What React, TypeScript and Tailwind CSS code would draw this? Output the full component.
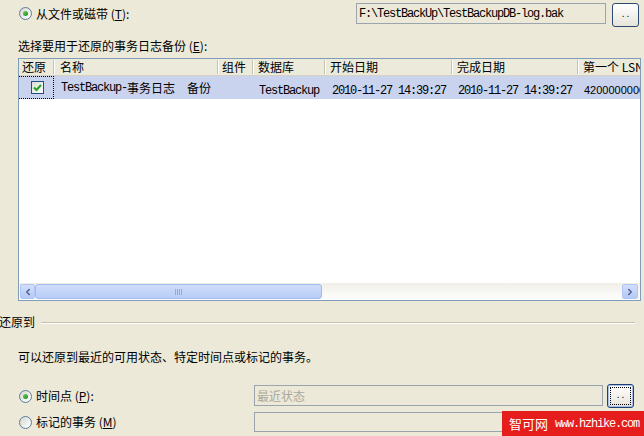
import { ChevronLeft, ChevronRight } from "lucide-react";

const cjk = "font-['Noto_Sans_CJK_SC',sans-serif] text-[12px]";
const mono = "font-['Liberation_Mono','Noto_Sans_CJK_SC',monospace] text-[12px] tracking-[-1.2px]";

function Radio({ checked }: { checked?: boolean }) {
  return (
    <span className="relative inline-block w-[13px] h-[13px] shrink-0 rounded-full border border-[#5d7c9c] bg-gradient-to-br from-[#d8d8cf] to-white">
      {checked && (
        <span className="absolute left-[3px] top-[3px] w-[5px] h-[5px] rounded-full bg-gradient-to-br from-[#5fd35f] to-[#1a8a1a]" />
      )}
    </span>
  );
}

function XpButton({ focused }: { focused?: boolean }) {
  return (
    <div
      className={
        "w-[27px] h-[24px] shrink-0 rounded-[3px] border flex items-center justify-center bg-gradient-to-b from-white to-[#e6e4da] " +
        (focused ? "border-[#1e3f72] shadow-[inset_0_0_0_1px_#a9c0ea]" : "border-[#2c4a73]")
      }
    >
      <div className={"w-[21px] h-[18px] flex items-center justify-center " + (focused ? "border border-dotted border-black" : "")}>
        <span className="font-['Liberation_Sans',sans-serif] text-[10px] leading-none tracking-[2px] text-black -mt-[2px] pl-[2px]">..</span>
      </div>
    </div>
  );
}

function HeaderCell({ w, label, pl = 5 }: { w: number; label: string; pl?: number }) {
  return (
    <div className="flex items-center h-full shrink-0" style={{ width: w }}>
      <span className={cjk + " flex-1 whitespace-nowrap overflow-hidden text-black"} style={{ paddingLeft: pl }}>
        {label}
      </span>
      <span className="w-px h-[14px] bg-[#c5c2b2] shadow-[1px_0_0_#ffffff]" />
    </div>
  );
}

export default function App() {
  return (
    <div className="relative w-[644px] h-[436px] overflow-hidden bg-[#ece9d8] text-black flex flex-col">
      {/* source row */}
      <div className="flex mt-[3px] h-[24px]">
        <div className="w-[356px] h-[21px] pl-[19px] flex items-center">
          <Radio checked />
          <span className={cjk + " ml-[4px] leading-none"}>
            从文件或磁带 (<u>T</u>):
          </span>
        </div>
        <div className="w-[250px] h-[21px] border border-[#9aa5ae] bg-[#ece9d8] flex items-center pl-[2px]">
          <span className={mono + " whitespace-pre"}>F:\TestBackUp\TestBackupDB-log.bak</span>
        </div>
        <div className="ml-[6px]">
          <XpButton />
        </div>
      </div>

      <div className={cjk + " mt-[12px] h-[14px] leading-[14px] pl-[18px]"}>
        选择要用于还原的事务日志备份 (<u>E</u>):
      </div>

      {/* backup list */}
      <div className="mt-[5px] ml-[18px] w-[623px] h-[243px] border border-[#7f9db9] bg-white flex flex-col overflow-hidden">
        <div className="h-[17px] flex bg-[#ebeadb] border-b border-[#d6d2c2] shrink-0 whitespace-nowrap">
          <HeaderCell w={35} label="还原" pl={3} />
          <HeaderCell w={164} label="名称" pl={6} />
          <HeaderCell w={35} label="组件" pl={4} />
          <HeaderCell w={72} label="数据库" />
          <HeaderCell w={127} label="开始日期" />
          <HeaderCell w={126} label="完成日期" />
          <HeaderCell w={80} label="第一个 LSN" />
        </div>
        <div className="h-[23px] flex bg-[#cad3ee] shrink-0 whitespace-nowrap items-center">
          <div className="w-[36px] shrink-0 h-full -ml-px border border-dotted border-black flex items-center justify-center pl-[2px]">
            <span className="w-[13px] h-[13px] border border-[#1c5180] bg-gradient-to-br from-[#dcdcd6] to-white flex items-center justify-center">
              <svg width="9" height="9" viewBox="0 0 9 9">
                <path d="M1 4.5 L3.5 7 L8 2" stroke="#21a121" strokeWidth="2" fill="none" />
              </svg>
            </span>
          </div>
          <div className="w-[164px] shrink-0 pl-[7px] flex items-center overflow-hidden">
            <span className={mono + " whitespace-pre"}>TestBackup-</span>
            <span className={cjk}>事务日志</span>
            <span className={mono + " whitespace-pre"}>  </span>
            <span className={cjk}>备份</span>
          </div>
          <div className="w-[35px] shrink-0" />
          <div className="w-[72px] shrink-0 pl-[6px] overflow-hidden">
            <span className={mono}>TestBackup</span>
          </div>
          <div className="w-[127px] shrink-0 pl-[7px] overflow-hidden">
            <span className={mono + " whitespace-pre"}>2010-11-27 14:39:27</span>
          </div>
          <div className="w-[126px] shrink-0 pl-[6px] overflow-hidden">
            <span className={mono + " whitespace-pre"}>2010-11-27 14:39:27</span>
          </div>
          <div className="w-[80px] shrink-0 pl-[6px]">
            <span className="font-['Liberation_Sans',sans-serif] text-[11px]">42000000000000</span>
          </div>
        </div>
        <div className="flex-1" />
        {/* horizontal scrollbar */}
        <div className="h-[17px] shrink-0 flex items-stretch px-[1px] py-px bg-gradient-to-b from-[#f0efe8] to-white">
          <div className="w-[15px] rounded-[2px] border border-[#b3c6f3] bg-gradient-to-b from-[#d2defc] to-[#b5c9f6] flex items-center justify-center">
            <ChevronLeft size={10} strokeWidth={3.5} color="#4d6185" />
          </div>
          <div className="w-[287px] rounded-[3px] border border-[#a3baee] bg-gradient-to-b from-[#cfdcfb] to-[#b9cdf7] flex items-center justify-center gap-[1px]">
            <span className="w-px h-[6px] bg-[#8fa9e3]" />
            <span className="w-px h-[6px] bg-[#8fa9e3]" />
            <span className="w-px h-[6px] bg-[#8fa9e3]" />
            <span className="w-px h-[6px] bg-[#8fa9e3]" />
          </div>
          <div className="flex-1" />
          <div className="w-[16px] mr-[1px] rounded-[2px] border border-[#b3c6f3] bg-gradient-to-b from-[#d2defc] to-[#b5c9f6] flex items-center justify-center">
            <ChevronRight size={10} strokeWidth={3.5} color="#4d6185" />
          </div>
        </div>
      </div>

      {/* restore-to group */}
      <div className="mt-[14px] h-[14px] flex items-center">
        <span className={cjk + " leading-none -ml-[1px]"}>还原到</span>
        <span className="flex-1 ml-[6px] mr-[9px] h-px bg-[#c5c2b2] shadow-[0_1px_0_#ffffff]" />
      </div>

      <div className={cjk + " mt-[21px] h-[14px] leading-[14px] pl-[18px]"}>
        可以还原到最近的可用状态、特定时间点或标记的事务。
      </div>

      <div className="mt-[20px] h-[24px] flex">
        <div className="w-[254px] pl-[19px] flex items-center">
          <Radio checked />
          <span className={cjk + " ml-[4px] leading-none"}>
            时间点 (<u>P</u>):
          </span>
        </div>
        <div className="mt-[1px] w-[349px] h-[21px] border border-[#9aa5ae] bg-[#ece9d8] flex items-center pl-[2px]">
          <span className={cjk + " text-[#aca899] leading-none"}>最近状态</span>
        </div>
        <div className="ml-[4px]">
          <XpButton focused />
        </div>
      </div>

      <div className="mt-[4px] h-[20px] flex">
        <div className="w-[254px] pl-[19px] flex items-center">
          <Radio />
          <span className={cjk + " ml-[4px] leading-none"}>
            标记的事务 (<u>M</u>)
          </span>
        </div>
        <div className="w-[380px] h-[20px] border border-[#9aa5ae] bg-[#ece9d8]" />
      </div>

      {/* watermark */}
      <div className="absolute left-[502px] top-[411px] w-[142px] h-[25px] bg-[#e61d1d] flex items-center text-white whitespace-nowrap">
        <span className="ml-[7px] shrink-0 font-['Noto_Sans_CJK_SC',sans-serif] text-[13px] leading-none">智可网</span>
        <span className="ml-[7px] shrink-0 font-['Liberation_Mono',monospace] text-[12px] tracking-[-1.2px] leading-none">www.hzhike.com</span>
      </div>
    </div>
  );
}
